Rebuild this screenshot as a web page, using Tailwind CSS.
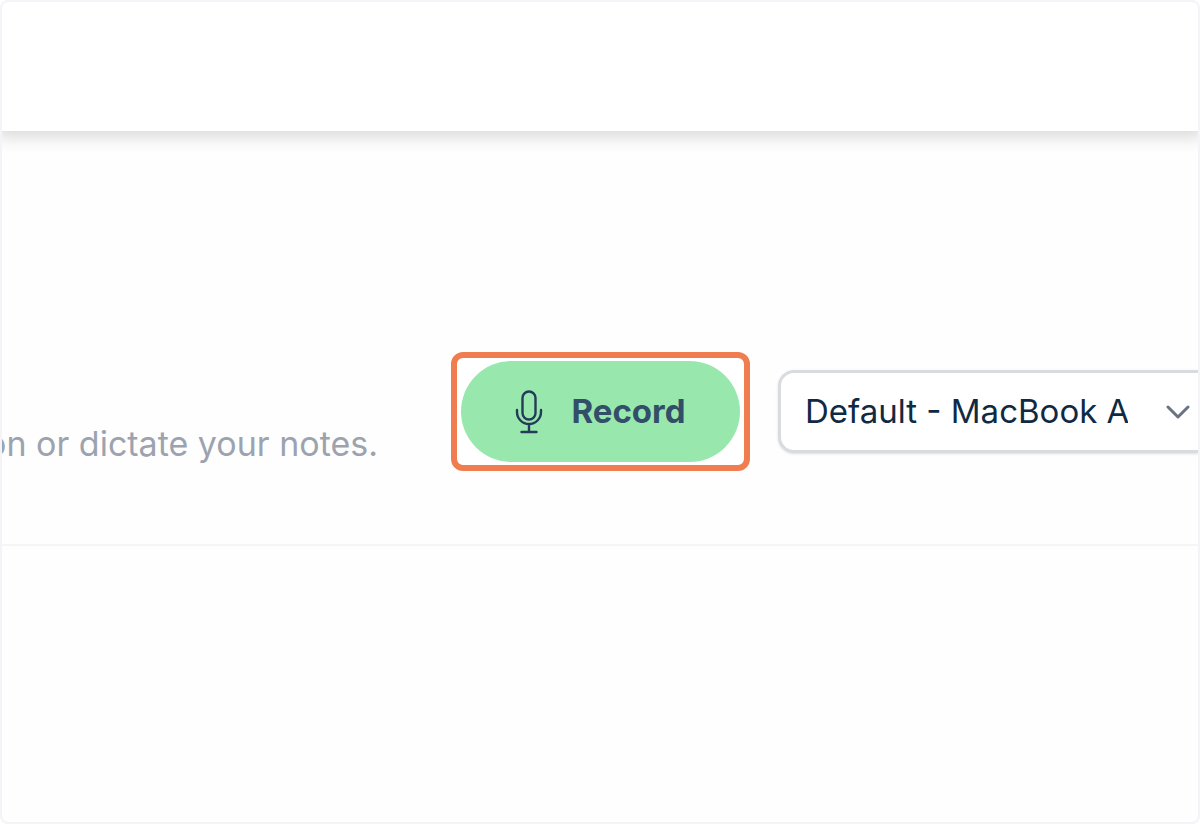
<!DOCTYPE html>
<html lang="en">
<head>
<meta charset="utf-8">
<meta name="viewport" content="width=device-width, initial-scale=1">
<title>Record</title>
<script src="https://cdn.jsdelivr.net/npm/@tailwindcss/browser@4"></script>
</head>
<body class="bg-white font-['Inter',sans-serif]">
<div class="flex min-h-screen flex-col overflow-hidden rounded-lg border-2 border-[#f3f3f8] bg-[#fefefe]">
  <header class="h-[129px] shrink-0 bg-white shadow-[0_0_16px_6px_rgba(0,0,0,0.15)]"></header>
  <main class="flex-1">
    <section class="flex items-center border-b-2 border-[#f5f5f6] pt-[221px] pb-[73px]">
      <p class="mt-16 flex w-[376px] shrink-0 justify-end overflow-hidden text-[34px] leading-10 whitespace-nowrap text-[#9ca3af]">on or dictate your notes.</p>
      <div class="ml-[73px] shrink-0 rounded-xl border-6 border-[#f07d50] bg-white px-1 py-[3px]">
        <button type="button" class="flex h-[101px] w-[279px] items-center justify-center gap-7 rounded-full bg-[#98e8ae] text-[33px] font-bold text-[#334e68]">
          <svg class="h-11 w-7" viewBox="0 0 28 44" fill="none" stroke="#243b5a" stroke-width="2.4" stroke-linecap="round" stroke-linejoin="round" aria-hidden="true">
            <rect x="7.5" y="1.5" width="13" height="28" rx="6.5"/>
            <path d="M2 20v2a12 12 0 0 0 24 0v-2M14 34v8M6.500 42h15"/>
          </svg>
          Record
        </button>
      </div>
      <div class="relative ml-7 min-w-0 flex-1">
        <select aria-label="Microphone" class="block h-[83px] w-full appearance-none rounded-l-2xl border-3 border-r-0 border-[#d8dbe0] bg-white pr-[70px] pl-6 text-[33px] text-[#102a43] shadow-sm">
          <option>Default - MacBook Air Microphone (Built-in)</option>
        </select>
        <svg class="pointer-events-none absolute top-1/2 right-2 h-4 w-6 -translate-y-1/2" viewBox="0 0 24 16" fill="none" stroke="#6b7280" stroke-width="3" stroke-linecap="round" stroke-linejoin="round" aria-hidden="true"><path d="M2 3l10 10L22 3"/></svg>
      </div>
    </section>
  </main>
</div>
</body>
</html>
